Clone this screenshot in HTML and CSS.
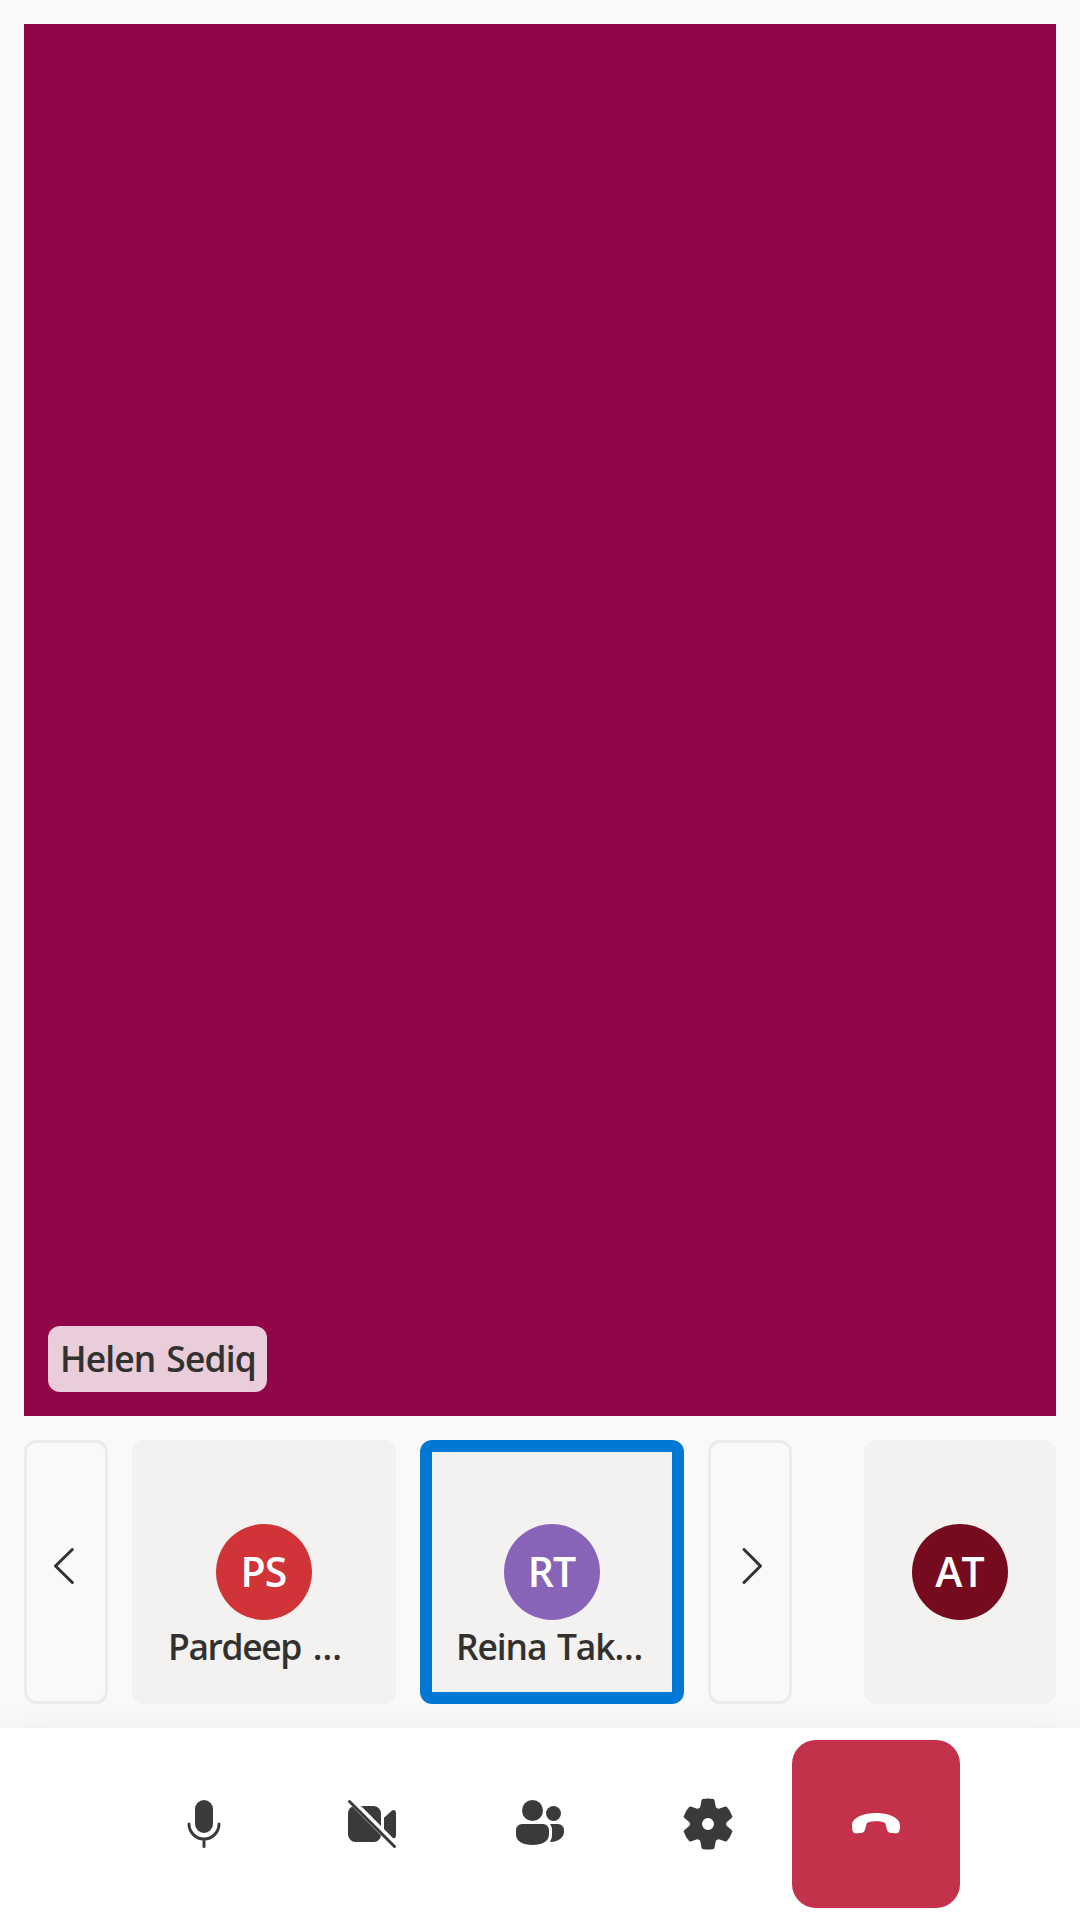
FILE: index.html
```html
<!DOCTYPE html>
<html lang="en">
<head>
<meta charset="utf-8">
<title>Call</title>
<link rel="stylesheet" href="styles.css">
</head>
<body>
<div class="call">
  <main class="stage">
    <section class="speaker"><span class="speaker-name">Helen Sediq</span></section>
    <section class="strip">
      <button class="pager" aria-label="Previous"><svg class="icon" viewBox="0 0 20 20"><path class="line" d="M12.1 4.5 6.5 10l5.6 5.5"/></svg></button>
      <article class="tile"><div class="avatar red">PS</div><div class="name tight">Pardeep <span class="dots">...</span></div></article>
      <article class="tile active"><div class="avatar purple">RT</div><div class="name">Reina Tak<span class="dots">...</span></div></article>
      <button class="pager" aria-label="Next"><svg class="icon" viewBox="0 0 20 20"><path class="line" d="M8 4.5 13.5 10 8 15.5"/></svg></button>
      <article class="tile self"><div class="avatar maroon">AT</div></article>
    </section>
  </main>
  <nav class="controls">
    <button class="control" aria-label="Microphone"><svg class="icon" viewBox="0 0 20 20"><rect x="7" y="2" width="6" height="11" rx="3"/><path class="line" d="M5 10a5 5 0 0 0 10 0M10 15v2.5"/></svg></button>
    <button class="control" aria-label="Camera"><svg class="icon" viewBox="0 0 20 20"><path d="M6.34 4h4.16A2.5 2.5 0 0 1 13 6.5v4.16zM3.4 4.2 13 13.8A2.5 2.5 0 0 1 10.5 16h-6A2.5 2.5 0 0 1 2 13.5v-7c0-1 .57-1.88 1.4-2.3zM14 7.93l2.67-2.4c.5-.45 1.33-.1 1.33.62v7.7c0 .74-.5 1.04-.95.86L14 11.66z"/><path class="line" d="m2.5 2.5 15 15"/></svg></button>
    <button class="control" aria-label="People"><svg class="icon" viewBox="0 0 20 20"><circle cx="7.5" cy="5.5" r="3.5"/><circle cx="14.5" cy="6.5" r="2.5"/><path d="M4 10a2 2 0 0 0-2 2v1.5C2 15.7 4.25 17 7.5 17s5.5-1.3 5.5-3.5V12a2 2 0 0 0-2-2zM13.3 10H16a2 2 0 0 1 2 2v.5c0 2.1-1.9 3.5-4.7 3.5.46-.7.7-1.55.7-2.5V12c0-.78-.24-1.48-.7-2z"/></svg></button>
    <button class="control" aria-label="Settings"><svg class="icon" viewBox="0 0 20 20"><path d="M1.91 7.38A8.5 8.5 0 0 1 3.7 4.3a.5.5 0 0 1 .54-.13l1.92.68a1 1 0 0 0 1.32-.76l.36-2a.5.5 0 0 1 .4-.4 8.53 8.53 0 0 1 3.55 0c.2.04.35.2.38.4l.37 2a1 1 0 0 0 1.32.76l1.92-.68a.5.5 0 0 1 .54.13 8.5 8.5 0 0 1 1.78 3.08c.06.2 0 .4-.15.54l-1.56 1.32a1 1 0 0 0 0 1.52l1.56 1.32a.5.5 0 0 1 .15.54 8.5 8.5 0 0 1-1.78 3.08.5.5 0 0 1-.54.13l-1.92-.68a1 1 0 0 0-1.32.76l-.37 2a.5.5 0 0 1-.38.4 8.53 8.53 0 0 1-3.56 0 .5.5 0 0 1-.39-.4l-.36-2a1 1 0 0 0-1.32-.76l-1.92.68a.5.5 0 0 1-.54-.13 8.5 8.5 0 0 1-1.78-3.08.5.5 0 0 1 .15-.54l1.56-1.32a1 1 0 0 0 0-1.52L2.06 7.92a.5.5 0 0 1-.15-.54zM8 10a2 2 0 1 0 4 0 2 2 0 0 0-4 0z"/></svg></button>
    <button class="control hangup" aria-label="Leave"><svg class="icon" viewBox="0 0 20 20"><path d="M10 6.33c4 0 8 1.5 8 4.1 0 .6-.04 1.2-.16 1.7-.16.65-.67 1.05-1.34.99l-1.55-.13c-.62-.05-1.04-.4-1.23-1l-.6-2.05c-.25-.6-1.8-.83-3.12-.83s-2.87.23-3.12.83L6.28 12c-.19.6-.61.94-1.23.99l-1.55.13c-.67.06-1.18-.34-1.34-.99-.12-.5-.16-1.1-.16-1.7 0-2.6 4-4.1 8-4.1z"/></svg></button>
  </nav>
</div>
</body>
</html>
```
FILE: styles.css
```css
* { box-sizing: border-box; }
body { margin: 0; font-family: "Open Sans", "Noto Sans", sans-serif; font-weight: 600; color: #323130; background: #faf9f8; }
button { border: 0; padding: 0; background: none; color: inherit; }
.call { height: 1920px; display: flex; flex-direction: column; overflow: hidden; }
.stage { flex: 1; display: flex; flex-direction: column; gap: 24px; padding: 24px; }
.speaker { flex: 1; display: flex; align-items: flex-end; padding: 24px; background: #910649; }
.speaker-name { width: 219px; height: 66px; padding-left: 12px; border-radius: 12px; background: rgba(255, 255, 255, .8); font-size: 35.4px; line-height: 64px; letter-spacing: -.85px; word-spacing: 2.5px; white-space: nowrap; }
.strip { height: 264px; display: flex; gap: 24px; }
.pager { width: 84px; display: flex; align-items: center; justify-content: center; padding-bottom: 12px; border: 3px solid #edebe9; border-radius: 12px; }
.tile { width: 264px; padding-top: 84px; display: flex; flex-direction: column; align-items: center; border-radius: 12px; background: #f3f2f1; }
.tile.active { padding-top: 72px; border: 12px solid #0078d4; }
.tile.self { width: 192px; margin-left: auto; }
.avatar { width: 96px; height: 96px; border-radius: 50%; color: #fff; font-size: 41px; line-height: 95px; text-align: center; letter-spacing: -.8px; text-indent: -1px; }
.red { background: #d13438; }
.purple { background: #8764b8; }
.maroon { background: #750b1c; }
.name { width: 192px; font-size: 35.4px; line-height: 52px; letter-spacing: -1.1px; word-spacing: 2.5px; white-space: nowrap; }
.name.tight { letter-spacing: -1.35px; word-spacing: 4px; }
.dots { letter-spacing: 0; }
.name:not(.tight) .dots { letter-spacing: -.2px; }
.controls { height: 192px; display: flex; justify-content: center; align-items: center; background: #fff; box-shadow: 0 19.2px 43.2px rgba(0, 0, 0, .132); }
.control { width: 168px; height: 168px; display: flex; align-items: center; justify-content: center; border-radius: 24px; color: #3b3a39; }
.hangup { background: #c4314b; color: #fff; }
.icon { width: 60px; height: 60px; fill: currentColor; }
.line { fill: none; stroke: currentColor; stroke-width: 1; stroke-linecap: round; stroke-linejoin: round; }
```
